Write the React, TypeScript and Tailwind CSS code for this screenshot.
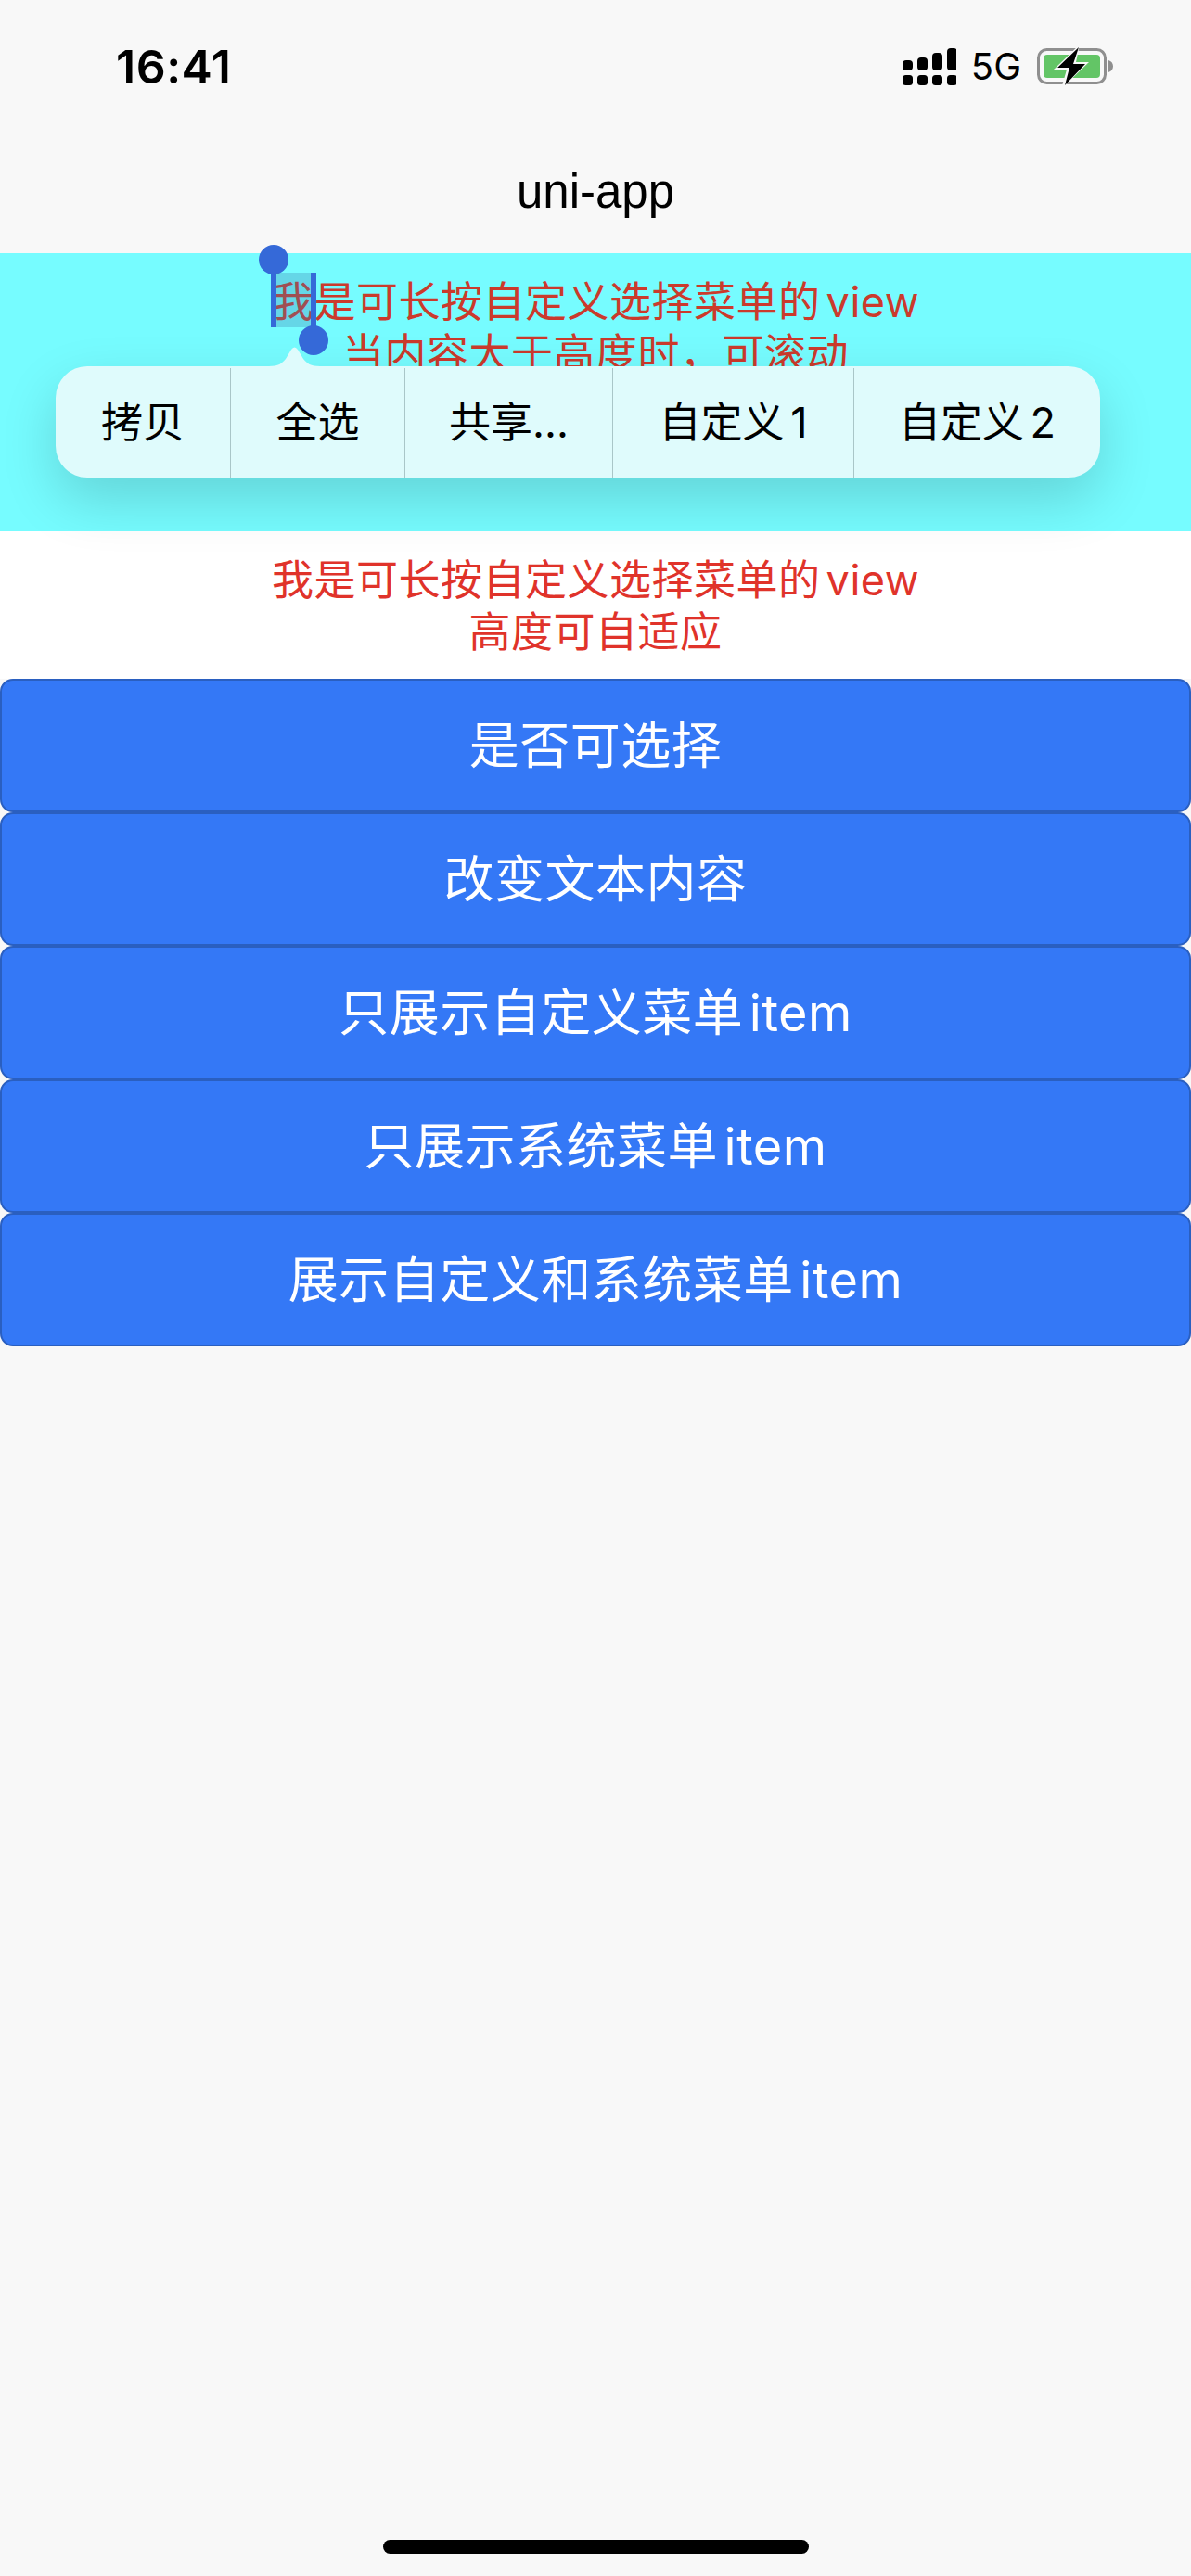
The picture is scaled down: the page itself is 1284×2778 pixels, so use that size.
const CJK = "font-['Inter','Noto_Sans_CJK_SC',sans-serif]";

const buttons = ['是否可选择', '改变文本内容', '只展示自定义菜单 item', '只展示系统菜单 item', '展示自定义和系统菜单 item'];
const menuItems = [
  { label: '拷贝', width: 'w-[189px]' },
  { label: '全选', width: 'w-[188px]' },
  { label: '共享...', width: 'w-[224px]' },
  { label: '自定义 1', width: 'w-[260px]' },
  { label: '自定义 2', width: 'flex-1' },
];

function SignalIcon() {
  const cols = [
    { x: 0, top: 13 },
    { x: 16, top: 10 },
    { x: 32, top: 5 },
    { x: 48, top: 0 },
  ];
  return (
    <svg width="58" height="40" viewBox="0 0 58 40" fill="#000">
      {cols.map((c) => (
        <g key={c.x}>
          <rect x={c.x} y={c.top} width="11" height={24 - c.top} rx="4" />
          <rect x={c.x} y="29" width="11" height="11" rx="3.5" />
        </g>
      ))}
    </svg>
  );
}

function BatteryIcon() {
  return (
    <svg width="84" height="44" viewBox="0 0 84 44">
      <rect x="1.5" y="3.5" width="72" height="36" rx="9" fill="none" stroke="#8f8f8f" strokeWidth="3" />
      <rect x="7" y="9" width="61" height="25" rx="4" fill="#63c566" />
      <path d="M77 15 C80 16 82 18 82 21.5 C82 25 80 27 77 28 Z" fill="#8f8f8f" />
      <path d="M46 -2 L18 25 L32 25 L26 46 L56 17 L42 17 Z" fill="#f8f8f8" />
      <path d="M45 1 L22 23 L35 23 L30 42 L52 19 L39 19 Z" fill="#000" />
    </svg>
  );
}

function SelectionHandles() {
  return (
    <>
      <div className="absolute left-[279px] top-[-9px] h-[32px] w-[32px] rounded-full bg-[#3569d8]" />
      <div className="absolute left-[292px] top-[10px] h-[70px] w-[6px] bg-[#3569d8]" />
      <div className="absolute left-[298px] top-[21px] h-[59px] w-[37px] bg-[#3f7fb0]/30" />
      <div className="absolute left-[335px] top-[21px] h-[64px] w-[6px] bg-[#3569d8]" />
      <div className="absolute left-[322px] top-[78px] h-[32px] w-[32px] rounded-full bg-[#3569d8]" />
    </>
  );
}

export default function App() {
  return (
    <div className={`min-h-[2778px] w-full bg-[#f8f8f8] text-black ${CJK}`}>
      <div className="flex h-[273px] flex-col">
        <div className="flex h-[175px] items-start justify-between pl-[125px] pr-[82px] pt-[42px]">
          <span className="font-['Inter'] text-[50px] leading-[60px] font-semibold tracking-[0.5px]">16:41</span>
          <div className="flex items-center pt-[6px]">
            <SignalIcon />
            <span className="ml-[16px] font-['Inter'] text-[40px] leading-[48px]">5G</span>
            <span className="ml-[17px]">
              <BatteryIcon />
            </span>
          </div>
        </div>
        <div className="text-center font-['Liberation_Sans'] text-[51px] leading-[64px]">uni-app</div>
      </div>

      <section className="relative h-[300px] bg-[#76fcff]">
        <div className="h-[300px] overflow-hidden pt-[25px] text-center text-[45px] leading-[56px] tracking-[0.5px] text-[#cb3a2c] [word-spacing:-7px]">
          <p>我是可长按自定义选择菜单的 view</p>
          <p>当内容大于高度时，可滚动</p>
        </div>
        <div className="absolute left-[60px] top-[122px] flex h-[120px] w-[1126px] rounded-[34px] bg-[#dffbfc] pt-[2px] text-[45px] shadow-[0_24px_60px_rgba(0,0,0,0.16)] [word-spacing:-6px]">
          {menuItems.map((item, i) => (
            <div
              key={item.label}
              className={`flex items-center justify-center ${item.width} ${i < 4 ? 'border-r border-[#a9c6c8]' : ''}`}
            >
              {item.label}
            </div>
          ))}
          <svg className="absolute left-[230px] top-[-22px]" width="55" height="22" viewBox="0 0 55 22" fill="#dffbfc">
            <path d="M0 22 C10 22 14 19 18 14 L24 4 Q27.5 -1 31 4 L37 14 C41 19 45 22 55 22 Z" />
          </svg>
        </div>
        <SelectionHandles />
      </section>

      <section className="h-[159px] bg-white pt-[25px] text-center text-[45px] leading-[56px] tracking-[0.5px] text-[#e0332a] [word-spacing:-7px]">
        <p>我是可长按自定义选择菜单的 view</p>
        <p>高度可自适应</p>
      </section>

      <div className="flex flex-col">
        {buttons.map((label) => (
          <button
            key={label}
            className="h-[144px] w-full rounded-[14px] border-2 border-[#2a5fc0] bg-[#3478f6] text-center text-[54px] tracking-[0.5px] text-white [word-spacing:-9px]"
          >
            {label}
          </button>
        ))}
      </div>

      <div className="fixed bottom-[24px] left-[413px] h-[15px] w-[459px] rounded-full bg-black" />
    </div>
  );
}
